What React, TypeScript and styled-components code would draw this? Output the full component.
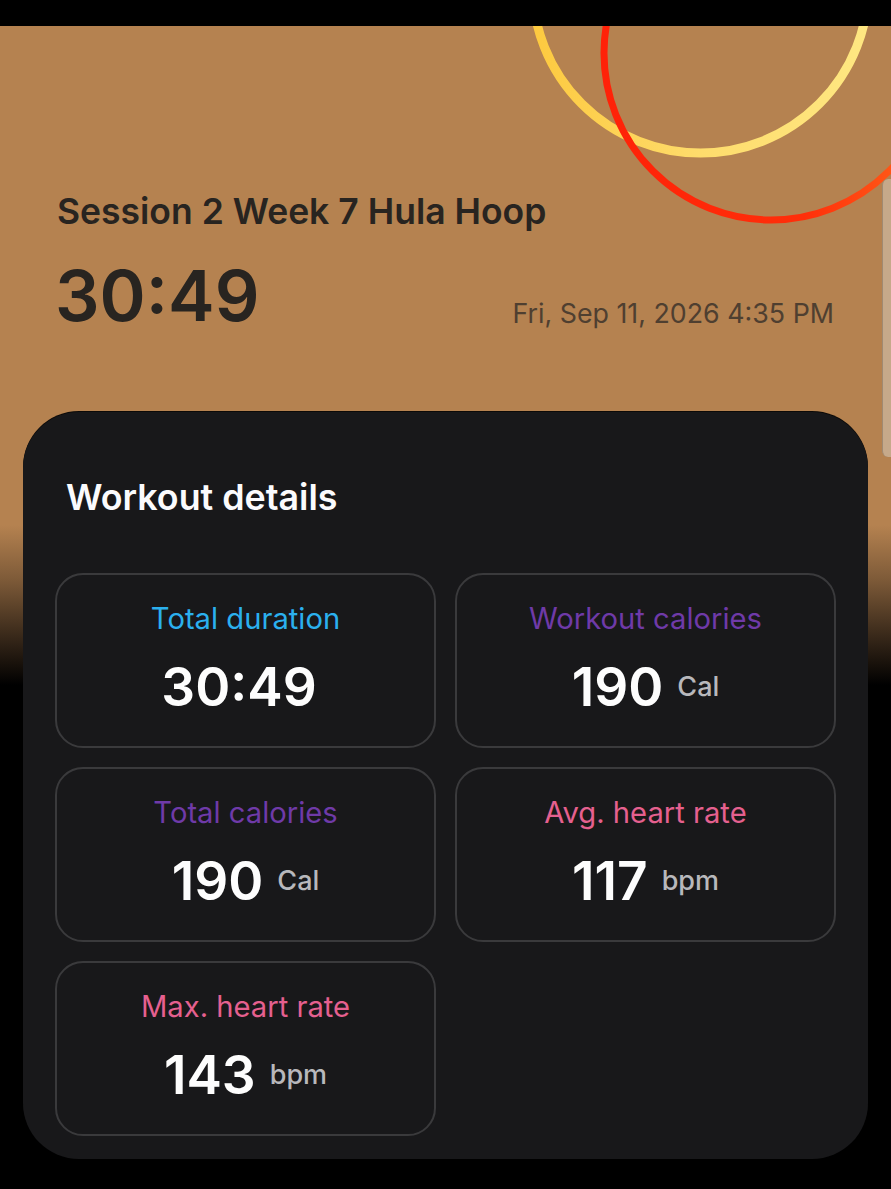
import styled, { createGlobalStyle } from "styled-components";

const GlobalStyle = createGlobalStyle`
  html, body {
    margin: 0;
    padding: 0;
    background: #000;
  }
`;

const stats = [
  { label: "Total duration", value: "30:49", color: "#2bb0ee" },
  { label: "Workout calories", value: "190", unit: "Cal", color: "#6f3aa8" },
  { label: "Total calories", value: "190", unit: "Cal", color: "#6f3aa8" },
  { label: "Avg. heart rate", value: "117", unit: "bpm", color: "#e5608f" },
  { label: "Max. heart rate", value: "143", unit: "bpm", color: "#e5608f" },
];

export default function App() {
  return (
    <Page>
      <GlobalStyle />
      <Rings viewBox="0 0 891 1189" aria-hidden="true">
        <defs>
          <linearGradient id="yellow" x1="0" y1="0" x2="1" y2="0">
            <stop offset="0" stopColor="#fdc93f" />
            <stop offset="0.5" stopColor="#fedc6c" />
            <stop offset="1" stopColor="#fee782" />
          </linearGradient>
          <linearGradient id="red" x1="0" y1="0" x2="1" y2="0">
            <stop offset="0" stopColor="#ff2208" />
            <stop offset="0.6" stopColor="#ff2f0a" />
            <stop offset="1" stopColor="#ff6a1c" />
          </linearGradient>
        </defs>
        <circle cx="700.5" cy="-15" r="168" fill="none" stroke="url(#yellow)" strokeWidth="9" />
        <circle cx="771" cy="53" r="167" fill="none" stroke="url(#red)" strokeWidth="7" />
      </Rings>
      <ScrollThumb />
      <StatusBar />
      <Hero>
        <Title>Session 2 Week 7 Hula Hoop</Title>
        <HeroRow>
          <Time>30:49</Time>
          <DateText>Fri, Sep 11, 2026 4:35 PM</DateText>
        </HeroRow>
      </Hero>
      <Panel>
        <PanelTitle>Workout details</PanelTitle>
        <Grid>
          {stats.map((s) => (
            <Card key={s.label}>
              <Label $color={s.color}>{s.label}</Label>
              <ValueRow $plain={!s.unit}>
                <Value>{s.value}</Value>
                {s.unit && <Unit>{s.unit}</Unit>}
              </ValueRow>
            </Card>
          ))}
        </Grid>
      </Panel>
    </Page>
  );
}

const Page = styled.div`
  position: relative;
  width: 891px;
  height: 1189px;
  overflow: hidden;
  font-family: Inter, "Noto Sans", sans-serif;
  background: linear-gradient(
    to bottom,
    #b58250 0,
    #b58250 525px,
    #7d5a38 580px,
    #2e2115 645px,
    #000 685px
  );
`;

const Rings = styled.svg`
  position: absolute;
  top: 0;
  left: 0;
  width: 891px;
  height: 1189px;
  filter: blur(0.6px);
`;

const ScrollThumb = styled.div`
  position: absolute;
  top: 179px;
  left: 882px;
  width: 14px;
  height: 278px;
  box-sizing: border-box;
  border-radius: 6px;
  border-left: 1px solid #a08a72;
  background: #c6a98a;
`;

const StatusBar = styled.div`
  position: relative;
  height: 26px;
  background: #000;
`;

const Hero = styled.div`
  position: relative;
  height: 386px;
  box-sizing: border-box;
  padding: 164px 57px 0;
`;

const Title = styled.div`
  font-size: 35.5px;
  line-height: 44px;
  font-weight: 600;
  color: #282420;
`;

const HeroRow = styled.div`
  display: flex;
  justify-content: space-between;
  align-items: flex-end;
  margin-top: 20px;
`;

const Time = styled.div`
  margin-left: -2px;
  font-size: 70px;
  line-height: 84px;
  font-weight: 600;
  color: #282420;
`;

const DateText = styled.div`
  font-size: 26.8px;
  line-height: 34px;
  color: #4f3f30;
  margin-bottom: 8px;
`;

const Panel = styled.div`
  position: relative;
  width: 845px;
  height: 747px;
  box-sizing: border-box;
  margin-left: 23px;
  padding: 61px 32px 0;
  border-radius: 56px;
  background: #18181a;
  box-shadow: 0 -1px 0 #0c0a08;
`;

const PanelTitle = styled.div`
  padding-left: 11px;
  font-size: 35.8px;
  line-height: 48px;
  font-weight: 600;
  color: #fbfbfd;
`;

const Grid = styled.div`
  display: grid;
  grid-template-columns: 381px 381px;
  grid-auto-rows: 175px;
  gap: 19px;
  margin-top: 52px;
`;

const Card = styled.div`
  box-sizing: border-box;
  display: flex;
  flex-direction: column;
  align-items: center;
  padding-top: 26px;
  border: 2.5px solid #3a3a3c;
  border-radius: 28px;
`;

const Label = styled.div<{ $color: string }>`
  font-size: 29.2px;
  line-height: 36px;
  color: ${(p) => p.$color};
`;

const ValueRow = styled.div<{ $plain: boolean }>`
  display: flex;
  align-items: center;
  gap: 14px;
  margin-top: 16px;
  padding-right: ${(p) => (p.$plain ? "13px" : "0")};
`;

const Value = styled.div`
  font-size: 53.2px;
  line-height: 68px;
  font-weight: 600;
  color: #fdfdfd;
`;

const Unit = styled.div`
  font-size: 27px;
  line-height: 34px;
  font-weight: 500;
  color: #b8b8bc;
`;
